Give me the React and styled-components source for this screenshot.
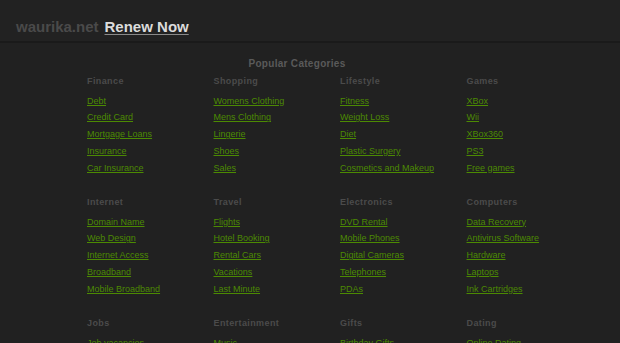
import React from 'react';
import styled, { createGlobalStyle } from 'styled-components';

//#region 全域樣式
const GlobalStyle = createGlobalStyle`
    html, body {
        margin: 0;
        padding: 0;
        background: #212121;
        font-family: "Liberation Sans", Arial, sans-serif;
        overflow: hidden;
    }
`
//#endregion

//#region 分類資料
const groups = [
    [
        { title: "Finance", links: ["Debt", "Credit Card", "Mortgage Loans", "Insurance", "Car Insurance"] },
        { title: "Shopping", links: ["Womens Clothing", "Mens Clothing", "Lingerie", "Shoes", "Sales"] },
        { title: "Lifestyle", links: ["Fitness", "Weight Loss", "Diet", "Plastic Surgery", "Cosmetics and Makeup"] },
        { title: "Games", links: ["XBox", "Wii", "XBox360", "PS3", "Free games"] },
    ],
    [
        { title: "Internet", links: ["Domain Name", "Web Design", "Internet Access", "Broadband", "Mobile Broadband"] },
        { title: "Travel", links: ["Flights", "Hotel Booking", "Rental Cars", "Vacations", "Last Minute"] },
        { title: "Electronics", links: ["DVD Rental", "Mobile Phones", "Digital Cameras", "Telephones", "PDAs"] },
        { title: "Computers", links: ["Data Recovery", "Antivirus Software", "Hardware", "Laptops", "Ink Cartridges"] },
    ],
    [
        { title: "Jobs", links: ["Job vacancies"] },
        { title: "Entertainment", links: ["Music"] },
        { title: "Gifts", links: ["Birthday Gifts"] },
        { title: "Dating", links: ["Online Dating"] },
    ],
]
//#endregion

//#region 頁首
const Header = styled.div`
    box-sizing: border-box;
    height: 43px;
    padding: 18px 0 0 16px;
    background: #222222;
    border-bottom: 2px solid #1a1a1a;
    display: flex;
    align-items: baseline;
    gap: 6px;
    font-size: 15px;
    font-weight: bold;
    line-height: 17px;
`

const Domain = styled.span`
    color: #4a4a4a;
`

const Renew = styled.a`
    color: #dcdcdc;
    text-decoration: underline;
    text-decoration-color: #8a8a8a;
    text-underline-offset: 2px;
`
//#endregion

//#region 分類區
const Main = styled.div`
    width: 506px;
    margin-left: 87px;
    padding-top: 15px;
`

const Title = styled.div`
    padding-right: 86px;
    text-align: center;
    color: #5a5a5a;
    font-size: 10px;
    font-weight: bold;
    letter-spacing: 0.3px;
    line-height: 12px;
    margin-bottom: 5px;
`

const Group = styled.div`
    display: grid;
    grid-template-columns: repeat(4, 126.5px);
    margin-bottom: 19.75px;
`

const Heading = styled.div`
    color: #4b4b4b;
    font-size: 9px;
    font-weight: bold;
    letter-spacing: 0.4px;
    line-height: 12px;
    margin-bottom: 5.5px;
`

const Link = styled.a`
    display: block;
    width: max-content;
    color: #4c8a02;
    font-size: 9px;
    line-height: 16.75px;
    text-decoration: underline;
`
//#endregion

export default function App() {
    return (
        <>
            <GlobalStyle />
            <Header>
                <Domain>waurika.net</Domain>
                <Renew href="#">Renew Now</Renew>
            </Header>
            <Main>
                <Title>Popular Categories</Title>
                {groups.map((group, i) => (
                    <Group key={i}>
                        {group.map((col) => (
                            <div key={col.title}>
                                <Heading>{col.title}</Heading>
                                {col.links.map((l) => (
                                    <Link key={l} href="#">{l}</Link>
                                ))}
                            </div>
                        ))}
                    </Group>
                ))}
            </Main>
        </>
    )
}
